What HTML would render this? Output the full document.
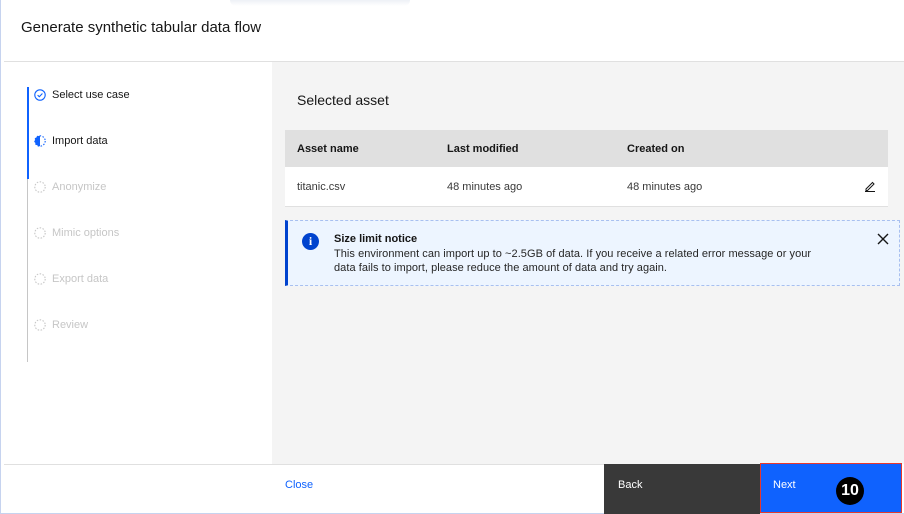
<!DOCTYPE html><html><head><style>
body{margin:0;width:904px;height:514px;overflow:hidden;font-family:"Liberation Sans",sans-serif;background:#fff;position:relative}
.a{position:absolute}
.t{font-size:11px;color:#161616}
.step{position:absolute;left:34px;font-size:11px}
.step svg{position:absolute;left:0;top:0}
.step span{margin-left:18px}
</style></head><body>
<div class="a" style="left:0;top:0;width:903px;height:513px;border:1px solid #c6d3ef;border-top:none"></div>
<div class="a" style="left:230px;top:0;width:180px;height:6px;background:linear-gradient(#eef1f6,#fff);border-radius:0 0 10px 10px"></div>
<div class="a" style="left:21px;top:19px;font-size:15px;color:#161616">Generate synthetic tabular data flow</div>
<div class="a" style="left:4px;top:61px;width:900px;height:1px;background:#e0e0e0"></div>
<div class="a" style="left:272px;top:62px;width:632px;height:402px;background:#f4f4f4"></div>
<div class="a" style="left:27px;top:87px;width:1px;height:275px;background:#c6c6c6"></div>
<div class="a" style="left:27px;top:87px;width:2px;height:92px;background:#0f62fe"></div>
<div class="step" style="top:89px;color:#161616"><svg width="12" height="12" viewBox="0 0 12 12"><circle cx="6" cy="6" r="5.2" fill="none" stroke="#0f62fe" stroke-width="1.1"/><path d="M3.6 6.1 L5.3 7.7 L8.4 4.5" fill="none" stroke="#0f62fe" stroke-width="1.1"/></svg><span>Select use case</span></div>
<div class="step" style="top:135px;color:#161616"><svg width="12" height="12" viewBox="0 0 12 12"><path d="M6 0.8 A5.2 5.2 0 0 0 6 11.2 Z" fill="#0f62fe"/><circle cx="6" cy="6" r="5.2" fill="none" stroke="#0f62fe" stroke-width="1.1" stroke-dasharray="1.5 1.5"/></svg><span>Import data</span></div>
<div class="step" style="top:181px;color:#c6c6c6"><svg width="12" height="12" viewBox="0 0 12 12"><circle cx="6" cy="6" r="5.2" fill="none" stroke="#c6c6c6" stroke-width="1.1" stroke-dasharray="1.5 1.5"/></svg><span>Anonymize</span></div>
<div class="step" style="top:227px;color:#c6c6c6"><svg width="12" height="12" viewBox="0 0 12 12"><circle cx="6" cy="6" r="5.2" fill="none" stroke="#c6c6c6" stroke-width="1.1" stroke-dasharray="1.5 1.5"/></svg><span>Mimic options</span></div>
<div class="step" style="top:273px;color:#c6c6c6"><svg width="12" height="12" viewBox="0 0 12 12"><circle cx="6" cy="6" r="5.2" fill="none" stroke="#c6c6c6" stroke-width="1.1" stroke-dasharray="1.5 1.5"/></svg><span>Export data</span></div>
<div class="step" style="top:319px;color:#c6c6c6"><svg width="12" height="12" viewBox="0 0 12 12"><circle cx="6" cy="6" r="5.2" fill="none" stroke="#c6c6c6" stroke-width="1.1" stroke-dasharray="1.5 1.5"/></svg><span>Review</span></div>
<div class="a" style="left:297px;top:92px;font-size:14px;color:#161616">Selected asset</div>
<div class="a" style="left:285px;top:130px;width:603px;height:37px;background:#e0e0e0"></div>
<div class="a t" style="left:297px;top:143px;font-weight:bold">Asset name</div>
<div class="a t" style="left:447px;top:143px;font-weight:bold">Last modified</div>
<div class="a t" style="left:627px;top:143px;font-weight:bold">Created on</div>
<div class="a" style="left:285px;top:167px;width:603px;height:39px;background:#fff;border-bottom:1px solid #e0e0e0"></div>
<div class="a t" style="left:297px;top:181px;color:#393939">titanic.csv</div>
<div class="a t" style="left:447px;top:181px;color:#393939">48 minutes ago</div>
<div class="a t" style="left:627px;top:181px;color:#393939">48 minutes ago</div>
<svg class="a" style="left:864px;top:180px" width="12" height="12" viewBox="0 0 12 12"><path d="M2 9 L2 10.5 L3.5 10.5 L10 4 L8.5 2.5 Z M1 11.5 H11" stroke="#161616" fill="none" stroke-width="1"/></svg>
<div class="a" style="left:285px;top:220px;width:615px;height:66px;background:#edf5ff;border:1px dashed #a8c0f0;box-sizing:border-box;border-left:3px solid #0043ce"></div>
<div class="a" style="left:302px;top:233px;width:17px;height:17px;border-radius:50%;background:#0043ce;color:#fff;font-size:12px;font-weight:bold;text-align:center;line-height:17px;font-family:'Liberation Serif',serif">i</div>
<div class="a t" style="left:334px;top:233px;font-weight:bold;font-size:11px">Size limit notice</div>
<div class="a t" style="left:334px;top:247px;font-size:11px;line-height:14px;color:#262626;letter-spacing:0.05px">This environment can import up to ~2.5GB of data. If you receive a related error message or your<br>data fails to import, please reduce the amount of data and try again.</div>
<svg class="a" style="left:877px;top:233px" width="12" height="12" viewBox="0 0 12 12"><path d="M1 1 L11 11 M11 1 L1 11" stroke="#161616" stroke-width="1.4"/></svg>
<div class="a" style="left:4px;top:464px;width:600px;height:1px;background:#e0e0e0"></div>
<div class="a" style="left:285px;top:479px;font-size:11px;color:#0f62fe">Close</div>
<div class="a" style="left:604px;top:464px;width:156px;height:50px;background:#393939"></div>
<div class="a" style="left:618px;top:479px;font-size:11px;color:#fff">Back</div>
<div class="a" style="left:760px;top:463px;width:142px;height:50px;background:#0f62fe;border:1.5px solid #e8372c;box-sizing:border-box"></div>
<div class="a" style="left:773px;top:479px;font-size:11px;color:#fff">Next</div>
<div class="a" style="left:836px;top:477px;width:28px;height:28px;border-radius:50%;background:#000;color:#fff;font-size:16px;font-weight:bold;text-align:center;line-height:28px">10</div>
</body></html>
